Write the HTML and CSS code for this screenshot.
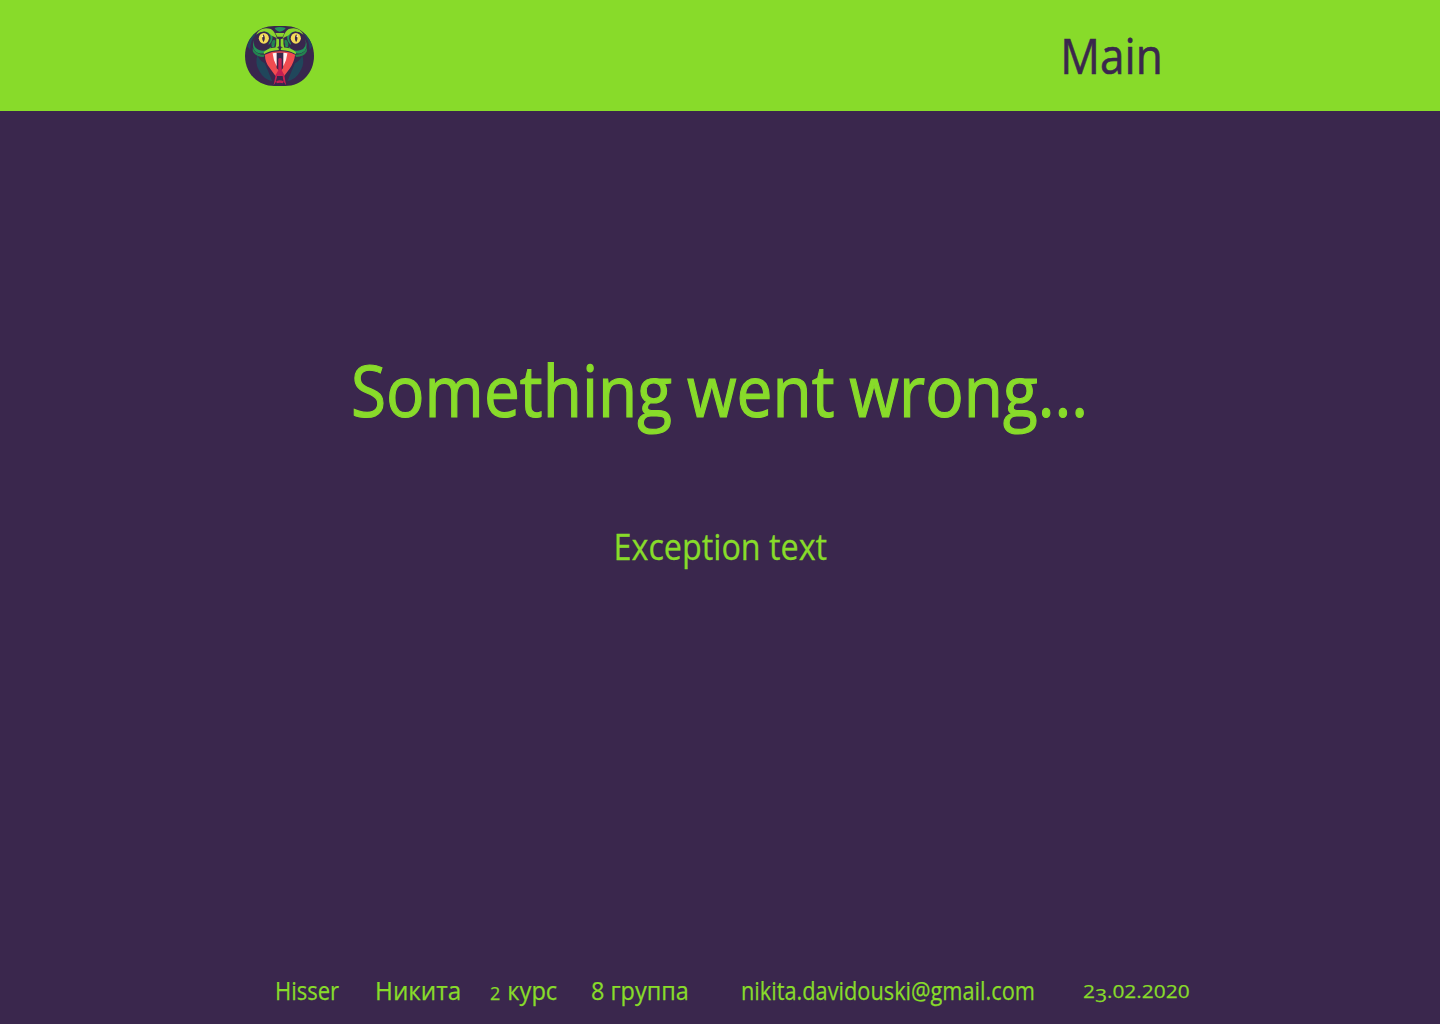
FILE: index.html
```html
<!DOCTYPE html>
<html lang="en">
<head>
<meta charset="utf-8">
<title>Hisser</title>
<link rel="stylesheet" href="styles.css">
</head>
<body>
<header class="header">
  <svg class="logo" viewBox="15 18 205 180" preserveAspectRatio="none" role="img" aria-label="Hisser">
    <defs><clipPath id="badge"><path d="M102 18H134C184 18 220 58 220 108C220 158 184 198 134 198H102C51 198 15 158 15 108C15 58 51 18 102 18Z"/></clipPath></defs>
    <g clip-path="url(#badge)">
      <rect x="15" y="18" width="205" height="180" fill="#38274d"/>
      <g id="side">
        <path d="M52 105 Q58 122 74 130 L96 184 Q70 178 58 154 Q43 131 52 105Z" fill="#20465b"/>
        <path d="M22 78 Q28 54 42 38 L46 44 Q31 60 30 90Z" fill="#20465b"/>
        <path d="M43 56 Q36 83 57 90 Q77 97 91 80 L93 87 Q78 105 54 99 Q31 89 43 56Z" fill="#239458"/>
        <path d="M38 83 Q48 105 74 104 L70 111 Q46 111 38 94Z" fill="#23834f"/>
        <path d="M75 31 Q96 30 97 51 Q97 65 85 75 Q91 49 75 31Z" fill="#239458"/>
        <path d="M48 44 Q62 18 92 27 Q104 34 110 55 Q91 47 83 37 Q67 29 48 44Z" fill="#8bd52d"/>
        <ellipse cx="72" cy="55" rx="19" ry="20" fill="#38274d"/>
        <ellipse cx="71" cy="55" rx="15" ry="16" fill="#f4db58"/>
        <path d="M70 43 Q78 55 70 67 Q62 55 70 43Z" fill="#38274d"/>
        <circle cx="67" cy="49" r="2.5" fill="#fff4ba"/>
        <ellipse cx="99" cy="69" rx="5" ry="10" transform="rotate(18 99 69)" fill="#23834f"/>
        <path d="M108 55 L116 58 L116 79 L105 86 Q109 72 108 55Z" fill="#8bd52d"/>
        <path d="M71 96 Q91 80 114 83 L116 90 Q88 91 71 103Z" fill="#8bd52d"/>
        <path d="M92 82 L103 72 L102 80Z" fill="#239458"/>
      </g>
      <use href="#side" transform="matrix(-1 0 0 1 237 0)"/>
      <path d="M103 24 Q118 18 136 24 Q130 34 118 35 Q108 34 103 24Z" fill="#239458"/>
      <path d="M105 39 L132 39 L127 50 L111 50Z" fill="#8bd52d"/>
      <path d="M74 104 Q95 94 118 94 Q143 94 164 104 Q161 127 147 147 L132 167 H105 L88 143 Q75 128 74 104Z" fill="#f04b50"/>
      <path d="M107 98 H131 L128 145 L119 154 L109 145Z" fill="#38274d"/>
      <path d="M97 100 L109 98 L109 139 Q99 121 97 100Z M141 100 L129 98 L129 139 Q139 121 141 100Z" fill="#fff2f2"/>
      <path d="M114 116 Q119 112 124 116 L124 151 L132 166 L137 196 L130 185 L126 167 H111 L107 185 L100 196 L106 165 L114 151Z" fill="#c41f52"/>
      <path d="M111 168 H126 L130 198 H106Z" fill="#38274d"/>
      <path d="M108 184 Q118 178 130 184 L128 190 Q118 187 109 190Z" fill="#c41f52"/>
    </g>
  </svg>
  <a class="nav-link">Main</a>
</header>
<main class="message">
  <h1 class="title">Something went wrong...</h1>
  <p class="details">Exception text</p>
</main>
<footer class="footer">
  <span class="brand">Hisser</span>
  <span class="name">Никита</span>
  <span class="course"><span class="low">2</span> курс</span>
  <span class="group">8 группа</span>
  <span class="email">nikita.davidouski@gmail.com</span>
  <span class="date">2<span class="drop">3</span>.02.2020</span>
</footer>
</body>
</html>
```
FILE: styles.css
```css
* { box-sizing: border-box; }
body {
  margin: 0;
  height: 1024px;
  display: flex;
  flex-direction: column;
  background: #3a274d;
  color: #88db2a;
  font-family: "Open Sans", "Noto Sans", sans-serif;
  overflow: hidden;
  white-space: nowrap;
}
.header {
  height: 111px;
  padding: 0 277px 0 245px;
  display: flex;
  align-items: center;
  justify-content: space-between;
  background: #88db2a;
}
.logo { width: 69px; height: 60px; display: block; }
.nav-link {
  color: #3a274d;
  font-size: 49px;
  line-height: 60px;
  padding-bottom: 2px;
  transform: scaleX(0.9);
  transform-origin: right;
  -webkit-text-stroke: 0.6px currentColor;
}
.message {
  flex: 1;
  display: flex;
  flex-direction: column;
  align-items: center;
}
.title {
  margin: 228px 0 0;
  font-size: 72px;
  font-weight: 400;
  line-height: 100px;
  word-spacing: -2px;
  transform: scaleX(0.889);
  -webkit-text-stroke: 1.2px currentColor;
}
.details {
  margin: 82px 0 0;
  font-size: 37px;
  line-height: 50px;
  transform: scaleX(0.873);
  -webkit-text-stroke: 0.3px currentColor;
}
.footer {
  height: 67px;
  padding: 15px 0 0 275px;
  display: flex;
  font-size: 25px;
  line-height: 36px;
}
.footer > span { flex: none; transform-origin: left; -webkit-text-stroke: 0.25px currentColor; }
.brand { width: 100px; transform: scaleX(0.88); }
.name { width: 115px; transform: scaleX(0.97); }
.course { width: 101px; transform: scaleX(0.945); }
.group { width: 150px; transform: scaleX(0.937); }
.email { width: 342px; transform: scaleX(0.87); }
.low { font-size: 19px; line-height: 1; margin-right: 1px; }
.date { font-size: 19px; line-height: 38px; transform: scaleX(1.1); }
.drop { position: relative; top: 4px; }
```
